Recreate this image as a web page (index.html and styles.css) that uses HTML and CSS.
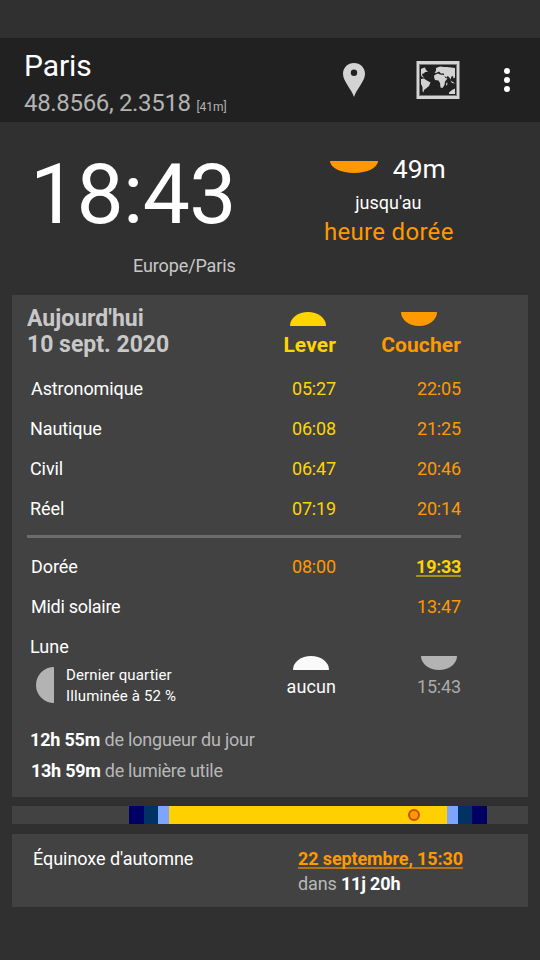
FILE: index.html
```
<!DOCTYPE html>
<html lang="fr">
<head>
<meta charset="utf-8">
<title>Paris</title>
<link rel="stylesheet" href="styles.css">
</head>
<body>
<header class="appbar">
  <div class="place">
    <h1 class="place-name">Paris</h1>
    <div class="coords">48.8566, 2.3518 <small class="altitude">[41m]</small></div>
  </div>
  <div class="actions">
    <svg class="pin" width="22" height="34" viewBox="0 0 22 34"><path fill="#d3d3d3" fill-rule="evenodd" d="M11 0C4.800 0 0 4.700 0 10.800C0 18.500 8.500 26 11 34C13.500 26 22 18.500 22 10.800C22 4.700 17.200 0 11 0ZM11 6.500a3.200 3.200 0 1 1 0 6.400a3.200 3.200 0 0 1 0-6.400Z"/></svg>
    <svg class="map" width="44" height="38" viewBox="0 0 44 38"><path fill="#d3d3d3" fill-rule="evenodd" d="M0.500 0H43.500V38H0.500ZM3.500 3V35H40.500V3Z"/><path fill="none" stroke="#777" d="M3.500 3.500H40.500V34.500H3.500Z"/>
      <g fill="#d3d3d3"><path d="M5 8L7 7L9 6.500L10 9L12 10.500L10 11L9 11L8 12.500L6.500 12.500L6 14L7 15.500L8.500 16.500L6 16L5 14Z"/><path d="M5 18L8 17.500L10 19L14.500 21.500L13 25L10 27.500L8 29L7.500 31.500L6.500 30L6.500 26L5 23Z"/><path d="M20 7L24 5.500L28 6L31 6L35 6.500L39 7V16.500L37.500 17.500L37 15L35.500 15.500L34.500 18.500L33 16L31.500 15L30.500 16.500L28 14.500L28 12.500L25 12.500L23 10.500L20 12L18.500 11.500L20 10Z"/><path d="M18.500 14L22 12.500L24 13.500L28 14L29.500 17L31.500 17.500L29 20.500L28.500 24L26.500 27L24.500 26.500L24 22L22.500 19.500L19 19L18 16Z"/><path d="M31 21L31.500 23L30.500 25L30 23ZM34.500 19.500L37 21L39 22.500L36 22Z"/><path d="M33 33L33 31.500L36 29L39 27.500V33Z"/></g></svg>
    <svg class="more" width="6" height="24" viewBox="0 0 6 24" fill="#fff"><circle cx="3" cy="3" r="3"/><circle cx="3" cy="12" r="3"/><circle cx="3" cy="21" r="3"/></svg>
  </div>
</header>
<section class="now">
  <div class="clock-block">
    <div class="clock">18:43</div>
    <div class="zone">Europe/Paris</div>
  </div>
  <div class="next">
    <div class="remaining"><i class="sun down wide"></i><span>49m</span></div>
    <div class="until">jusqu'au</div>
    <div class="event">heure dorée</div>
  </div>
</section>
<section class="card day">
  <div class="row head">
    <h2 class="date">Aujourd'hui<br>10 sept. 2020</h2>
    <div class="col rise"><i class="sun up"></i><b>Lever</b></div>
    <div class="col set"><i class="sun down"></i><b>Coucher</b></div>
  </div>
  <div class="row"><span class="label nudge">Astronomique</span><span class="rise">05:27</span><span class="set">22:05</span></div>
  <div class="row"><span class="label">Nautique</span><span class="rise">06:08</span><span class="set">21:25</span></div>
  <div class="row"><span class="label">Civil</span><span class="rise">06:47</span><span class="set">20:46</span></div>
  <div class="row"><span class="label">Réel</span><span class="rise">07:19</span><span class="set">20:14</span></div>
  <hr class="rule">
  <div class="row"><span class="label nudge">Dorée</span><span class="set">08:00</span><span class="upcoming">19:33</span></div>
  <div class="row"><span class="label nudge noon">Midi solaire</span><span></span><span class="set">13:47</span></div>
  <div class="row moon">
    <div>
      <div class="label moon-title">Lune</div>
      <div class="phase"><i class="quarter"></i><div>Dernier quartier<br>Illuminée à 52 %</div></div>
    </div>
    <div class="col moonrise"><i class="sun up"></i><span>aucun</span></div>
    <div class="col moonset"><i class="sun down"></i><span>15:43</span></div>
  </div>
  <p class="length"><b>12h 55m</b> de longueur du jour</p>
  <p class="length nudge"><b>13h 59m</b> de lumière utile</p>
</section>
<div class="lightmap">
  <i class="night"></i><i class="astro"></i><i class="nautical"></i><i class="civil"></i><i class="daylight"><i class="marker"></i></i><i class="civil"></i><i class="nautical"></i><i class="astro"></i>
</div>
<section class="card season">
  <span class="season-name">Équinoxe d'automne</span>
  <div><span class="season-date">22 septembre, 15:30</span><div class="countdown">dans <b>11j 20h</b></div></div>
</section>
</body>
</html>
```
FILE: styles.css
```
* { box-sizing: border-box; }
body {
  margin: 0;
  width: 540px;
  height: 960px;
  padding-top: 38px;
  overflow: hidden;
  background: #303030;
  color: #fff;
  font: 18px/24px Roboto, "Liberation Sans", sans-serif;
  white-space: nowrap;
}
h1, h2, p { margin: 0; }
i { display: block; }
.appbar {
  display: flex;
  justify-content: space-between;
  height: 84px;
  padding: 10px 30px 0 24px;
  background: #212121;
}
.place-name { font-size: 30px; font-weight: 400; line-height: 36px; letter-spacing: -0.1px; }
.coords { margin-top: 2px; font-size: 24px; line-height: 34px; letter-spacing: -0.33px; color: #b3b3b3; }
.altitude { margin-left: 0; font-size: 12px; letter-spacing: 0; }
.actions { display: flex; align-items: flex-start; }
.pin { margin: 15px 51px 0 0; }
.map { margin: 13px 44px 0 0; }
.more { margin-top: 20px; }

.now { display: flex; height: 173px; }
.clock-block { width: 237px; text-align: right; }
.clock { height: 100px; padding-top: 23px; font-size: 84px; line-height: 100px; letter-spacing: -0.7px; }
.zone { margin-top: 32px; letter-spacing: -0.12px; color: #c8c8c8; }
.next { width: 306px; padding-top: 30px; text-align: center; }
.remaining { display: flex; justify-content: center; gap: 15px; height: 39px; font-size: 26.500px; line-height: 34px; }
.until { padding-left: 1px; line-height: 24px; }
.event { padding-left: 2px; font-size: 24px; line-height: 34px; letter-spacing: 0.3px; color: #ff9900; }

.sun { width: 36px; height: 14px; background: currentColor; }
.up { border-radius: 18px 18px 0 0 / 14px 14px 0 0; }
.down { border-radius: 0 0 18px 18px / 0 0 14px 14px; }
.wide { width: 48px; height: 12px; margin-top: 9px; color: #ff9900; border-radius: 0 0 24px 24px / 0 0 12px 12px; }

.card { margin: 0 12px; background: #424242; }
.day { height: 502px; padding-left: 15px; }
.row {
  display: grid;
  grid-template-columns: 209px 100px 125px;
  height: 40px;
  line-height: 40px;
}
.row > :nth-child(n+2) { text-align: right; letter-spacing: -0.15px; }
.label { padding-left: 3px; letter-spacing: -0.1px; }
.label.nudge { padding-left: 4px; }
.label.noon { letter-spacing: -0.28px; }
.rise { color: #ffd500; }
.set { color: #ff9900; }
.head { height: 74px; padding-top: 10px; line-height: 26px; }
.date { padding-top: 1px; font-size: 23px; line-height: 26px; color: #c8c8c8; }
.col { display: flex; flex-direction: column; align-items: flex-end; }
.head .col { padding-top: 7px; font-size: 21px; letter-spacing: 0.1px; }
.head .col b { margin-top: 6px; }
.head .rise .sun { margin-right: 10px; }
.head .set .sun { margin-right: 24px; }
.rule { width: 434px; height: 3px; margin: 6px 0 9px; border: 0; background: #6c6c6c; }
.row > .upcoming { font-weight: 700; letter-spacing: -0.3px; color: #ffd500; text-decoration: underline; text-decoration-color: #a88f1c; text-decoration-thickness: 2px; text-underline-offset: 2px; }
.moon { height: 97px; line-height: 24px; }
.moon-title { height: 40px; line-height: 40px; letter-spacing: 0; }
.phase { display: flex; margin: -2px 0 0 9px; gap: 12px; font-size: 15px; line-height: 21px; letter-spacing: 0.14px; }
.quarter { width: 18px; height: 36px; margin-top: 2px; border-radius: 18px 0 0 18px; background: #b3b3b3; }
.moon .col { padding-top: 29px; }
.moon .col span { margin-top: 5px; }
.moonrise { color: #fafafa; }
.moonrise span { letter-spacing: 0.1px; }
.moonrise .sun { margin-right: 7px; }
.moonset { color: #aaa; }
.moonset .sun { margin-right: 4px; color: #b3b3b3; }
.length { padding-left: 3px; line-height: 31px; letter-spacing: -0.19px; color: #b8b8b8; }
.length.nudge { padding-left: 4px; letter-spacing: -0.27px; }
.length b { color: #fff; }

.lightmap { display: flex; height: 18px; margin: 9px 12px 10px; background: #424242; }
.night { width: 117px; }
.astro { width: 15px; background: #000064; }
.nautical { width: 14px; background: #003264; }
.civil { width: 11px; background: #7da5ff; }
.daylight { width: 278px; padding: 3px 0 0 239px; background: #ffd000; }
.marker { width: 12px; height: 12px; border: 2px solid #cf4b00; border-radius: 50%; background: #ff9900; }

.season { display: flex; height: 73px; padding: 13px 0 0 21px; }
.season-name { width: 265px; letter-spacing: -0.05px; }
.season-date { font-weight: 700; letter-spacing: -0.12px; color: #ff9900; text-decoration: underline; text-decoration-color: #b5701a; text-decoration-thickness: 2px; text-underline-offset: 2px; text-decoration-skip-ink: none; }
.countdown { margin-top: 1px; letter-spacing: -0.15px; color: #b8b8b8; }
.countdown b { color: #fff; }
```
